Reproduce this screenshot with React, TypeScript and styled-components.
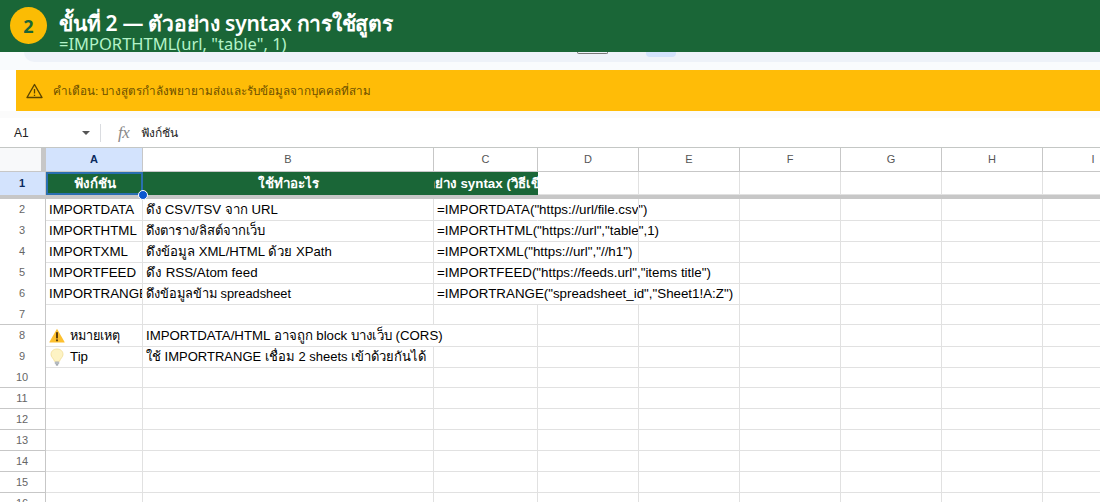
import React from "react";
import styled, { createGlobalStyle } from "styled-components";

const Global = createGlobalStyle`
  html, body { margin: 0; padding: 0; background: #fff; overflow: hidden; height: 502px; }
  body { font-family: "Liberation Sans", "Noto Sans", sans-serif; }
`;
const Page = styled.div`width: 1100px; height: 502px; overflow: hidden; display: flex; flex-direction: column; position: relative;`;
const Banner = styled.header`height: 52px; flex: none; background: #1a6637; display: flex; align-items: center; padding-left: 10px; gap: 12px; box-sizing: border-box; overflow: hidden;`;
const Badge = styled.div`width: 37px; height: 37px; margin-top: -1px; border-radius: 50%; background: #fbbc04; color: #1a6637; font: bold 18px "Noto Sans", sans-serif; display: flex; align-items: center; justify-content: center;`;
const Titles = styled.div`display: flex; flex-direction: column; margin-top: 9px;`;
const Title = styled.div`font: 600 21px/24px "Noto Sans", sans-serif; letter-spacing: -0.25px; color: #fff; white-space: nowrap;`;
const Sub = styled.div`font: 400 16.5px/15px "Noto Sans", sans-serif; color: #b4f3c9; white-space: nowrap; height: 15px; margin-top: 1px;`;
const ToolbarArea = styled.div`height: 18px; flex: none; background: #f9fbfd; display: flex; flex-direction: column; align-items: stretch;`;
const ToolbarPill = styled.div`height: 10px; margin-left: 24px; background: #eef2f9; border-bottom-left-radius: 10px; display: flex;`;
const DarkBit = styled.div`width: 31px; height: 2px; margin-left: 553px; border: 1px solid #777; border-top: 0; border-radius: 0 0 3px 3px; box-sizing: border-box;`;
const BlueBit = styled.div`width: 30px; height: 5px; margin-left: 38px; background: #d3e3fd; border-radius: 0 0 4px 4px;`;
const Warn = styled.div`height: 41px; flex: none; margin-left: 16px; background: #ffbc07; display: flex; align-items: center; padding-left: 10px; gap: 10px; color: #6b4f00; font-size: 11.7px;`;
const Pale = styled.div`height: 7px; flex: none; background: #fbfbfb;`;
const FormulaBar = styled.div`height: 29px; flex: none; display: flex; align-items: center; background: #fff; font-size: 12px; color: #222;`;
const NameBox = styled.div`width: 100px; box-sizing: border-box; padding-left: 14px; display: flex; align-items: center; justify-content: space-between; padding-right: 10px;`;
const Caret = styled.div`width: 0; height: 0; border-left: 4px solid transparent; border-right: 4px solid transparent; border-top: 4px solid #555;`;
const Divider = styled.div`width: 1px; height: 18px; background: #dadce0; margin-right: 17px;`;
const Fx = styled.span`font: italic 17px "Liberation Serif", serif; color: #888; width: 23px; letter-spacing: -0.5px;`;
const Sheet = styled.div`flex: 1; border-top: 1px solid #c4c7c5; overflow: hidden; min-height: 0; position: relative;`;
const Row = styled.div`display: grid; grid-template-columns: 46px 97px 291px 104px 101px 101px 101px 101px 101px 101px; background: #fff;`;
const HeadRow = styled(Row)`height: 24px;`;
const FrozenRow = styled(Row)`height: 23px;`;
const Thick = styled.div`height: 4px; background: #c7c7c7;`;
const DataRow = styled(Row)`height: 21px;`;
const Corner = styled.div`background: #f8f9fa; border-right: 5px solid #c7c7c7; border-bottom: 1px solid #c7c7c7; box-sizing: border-box;`;
const ColHead = styled.div<{ $sel?: boolean }>`
  box-sizing: border-box; display: flex; align-items: center; justify-content: center;
  border-right: 1px solid #c7c7c7; border-bottom: 1px solid #c7c7c7;
  font-size: 11px; padding-bottom: 1px;
  color: ${p => (p.$sel ? "#0a2a5e" : "#555")};
  font-weight: ${p => (p.$sel ? 700 : 400)};
  background: ${p => (p.$sel ? "#d3e3fd" : "#fff")};
`;
const RowHead = styled.div<{ $sel?: boolean }>`
  box-sizing: border-box; display: flex; align-items: center; justify-content: center;
  border-right: 1px solid #c7c7c7; border-bottom: ${p => (p.$sel ? 0 : "1px solid #c7c7c7")};
  font-size: 11px; padding-right: 1px; padding-bottom: 1px;
  color: ${p => (p.$sel ? "#0a2a5e" : "#666")};
  font-weight: ${p => (p.$sel ? 700 : 400)};
  background: ${p => (p.$sel ? "#d3e3fd" : "#fff")};
`;
const Cell = styled.div<{ $open?: boolean; $clip?: boolean; $size?: number }>`
  box-sizing: border-box; display: flex; align-items: center; gap: 5px; padding: 0 3px; white-space: nowrap;
  font-size: ${p => p.$size ?? 13.33}px; color: #000;
  border-bottom: 1px solid #e1e1e1;
  border-right: ${p => (p.$open ? "1px solid transparent" : "1px solid #e1e1e1")};
  overflow: ${p => (p.$clip ? "hidden" : "visible")};
`;
const HeadCell = styled.div`
  box-sizing: border-box; display: flex; align-items: center; justify-content: center; overflow: hidden; white-space: nowrap;
  background: #1a6637; color: #fff; font-size: 13.33px; font-weight: 700;
`;
const Selection = styled.div`position: absolute; left: 46px; top: 24px; width: 97px; height: 23px; box-sizing: border-box; border: 2px solid #2a6fb0; pointer-events: none;`;
const Handle = styled.div`position: absolute; left: 138px; top: 42px; width: 10px; height: 10px; box-sizing: border-box; border-radius: 50%; background: #0b57d0; border: 1px solid #fff;`;

const WarnIcon = () => (
  <svg width="17" height="16" viewBox="0 0 17 16" fill="none">
    <path d="M8.5 1.5 L16 14.5 H1 Z" stroke="#5c4500" strokeWidth="1.4" strokeLinejoin="round" />
    <path d="M8.5 6 V10.5 M8.5 11.7 V13" stroke="#5c4500" strokeWidth="1.3" />
  </svg>
);
const EmojiWarn = () => (
  <svg width="16" height="15" viewBox="0 0 16 15">
    <path d="M8 0.8 L15.6 14 Q15.8 14.6 15 14.6 H1 Q0.2 14.6 0.4 14 Z" fill="#fdc02f" />
    <rect x="7" y="4" width="2" height="6.5" rx="0.8" fill="#5a3b0a" />
    <circle cx="8" cy="12.3" r="1.1" fill="#5a3b0a" />
  </svg>
);
const EmojiBulb = () => (
  <svg width="16" height="18" viewBox="0 0 16 18">
    <path d="M8 1 C4 1 2 3.6 2 6.4 C2 9 4.6 10.4 5.6 13.4 H10.4 C11.4 10.4 14 9 14 6.4 C14 3.6 12 1 8 1 Z" fill="#fdf3c4" stroke="#f1dc94" strokeWidth="0.8" />
    <rect x="5.8" y="13.6" width="4.4" height="2.6" rx="0.6" fill="#b4bac0" />
    <rect x="6.8" y="16.2" width="2.4" height="1.2" rx="0.5" fill="#8a9097" />
  </svg>
);

const COLS = ["A", "B", "C", "D", "E", "F", "G", "H", "I"];
type R = { n: number; a?: React.ReactNode; aSize?: number; clipA?: boolean; b?: string; bSize?: number; openB?: boolean; c?: string; openC?: boolean; openD?: boolean };
const ROWS: R[] = [
  { n: 2, a: "IMPORTDATA", b: "ดึง CSV/TSV จาก URL", bSize: 13.2, c: '=IMPORTDATA("https://url/file.csv")', openC: true },
  { n: 3, a: "IMPORTHTML", b: "ดึงตาราง/ลิสต์จากเว็บ", bSize: 13, c: '=IMPORTHTML("https://url","table",1)', openC: true },
  { n: 4, a: "IMPORTXML", b: "ดึงข้อมูล XML/HTML ด้วย XPath", bSize: 13.15, c: '=IMPORTXML("https://url","//h1")', openC: true },
  { n: 5, a: "IMPORTFEED", b: "ดึง RSS/Atom feed", c: '=IMPORTFEED("https://feeds.url","items title")', openC: true, openD: true },
  { n: 6, a: "IMPORTRANGE", clipA: true, b: "ดึงข้อมูลข้าม spreadsheet", bSize: 12.8, c: '=IMPORTRANGE("spreadsheet_id","Sheet1!A:Z")', openC: true, openD: true },
  { n: 7 },
  { n: 8, a: <><EmojiWarn />หมายเหตุ</>, aSize: 12.6, b: "IMPORTDATA/HTML อาจถูก block บางเว็บ (CORS)", bSize: 13.25, openB: true },
  { n: 9, a: <><EmojiBulb />Tip</>, b: "ใช้ IMPORTRANGE เชื่อม 2 sheets เข้าด้วยกันได้", bSize: 13 },
  ...[10, 11, 12, 13, 14, 15, 16].map(n => ({ n })),
];

export default function App() {
  return (
    <Page>
      <Global />
      <Banner>
        <Badge>2</Badge>
        <Titles>
          <Title>ขั้นที่ 2 — ตัวอย่าง syntax การใช้สูตร</Title>
          <Sub>=IMPORTHTML(url, "table", 1)</Sub>
        </Titles>
      </Banner>
      <ToolbarArea>
        <ToolbarPill>
          <DarkBit />
          <BlueBit />
        </ToolbarPill>
      </ToolbarArea>
      <Warn>
        <WarnIcon />
        คำเตือน: บางสูตรกำลังพยายามส่งและรับข้อมูลจากบุคคลที่สาม
      </Warn>
      <Pale />
      <FormulaBar>
        <NameBox>A1<Caret /></NameBox>
        <Divider />
        <Fx>fx</Fx>
        ฟังก์ชัน
      </FormulaBar>
      <Sheet>
        <HeadRow>
          <Corner />
          {COLS.map((c, i) => <ColHead key={c} $sel={i === 0}>{c}</ColHead>)}
        </HeadRow>
        <FrozenRow>
          <RowHead $sel>1</RowHead>
          <HeadCell>ฟังก์ชัน</HeadCell>
          <HeadCell>ใช้ทำอะไร</HeadCell>
          <HeadCell>ตัวอย่าง syntax (วิธีเขียน)</HeadCell>
          {COLS.slice(3).map(c => <Cell key={c} />)}
        </FrozenRow>
        <Thick />
        {ROWS.map(r => (
          <DataRow key={r.n}>
            <RowHead>{r.n}</RowHead>
            <Cell $clip={r.clipA} $size={r.aSize}>{r.a}</Cell>
            <Cell $open={r.openB} $size={r.bSize}>{r.b}</Cell>
            <Cell $open={r.openC}>{r.c}</Cell>
            <Cell $open={r.openD} />
            {COLS.slice(4).map(c => <Cell key={c} />)}
          </DataRow>
        ))}
        <Selection />
        <Handle />
      </Sheet>
    </Page>
  );
}
